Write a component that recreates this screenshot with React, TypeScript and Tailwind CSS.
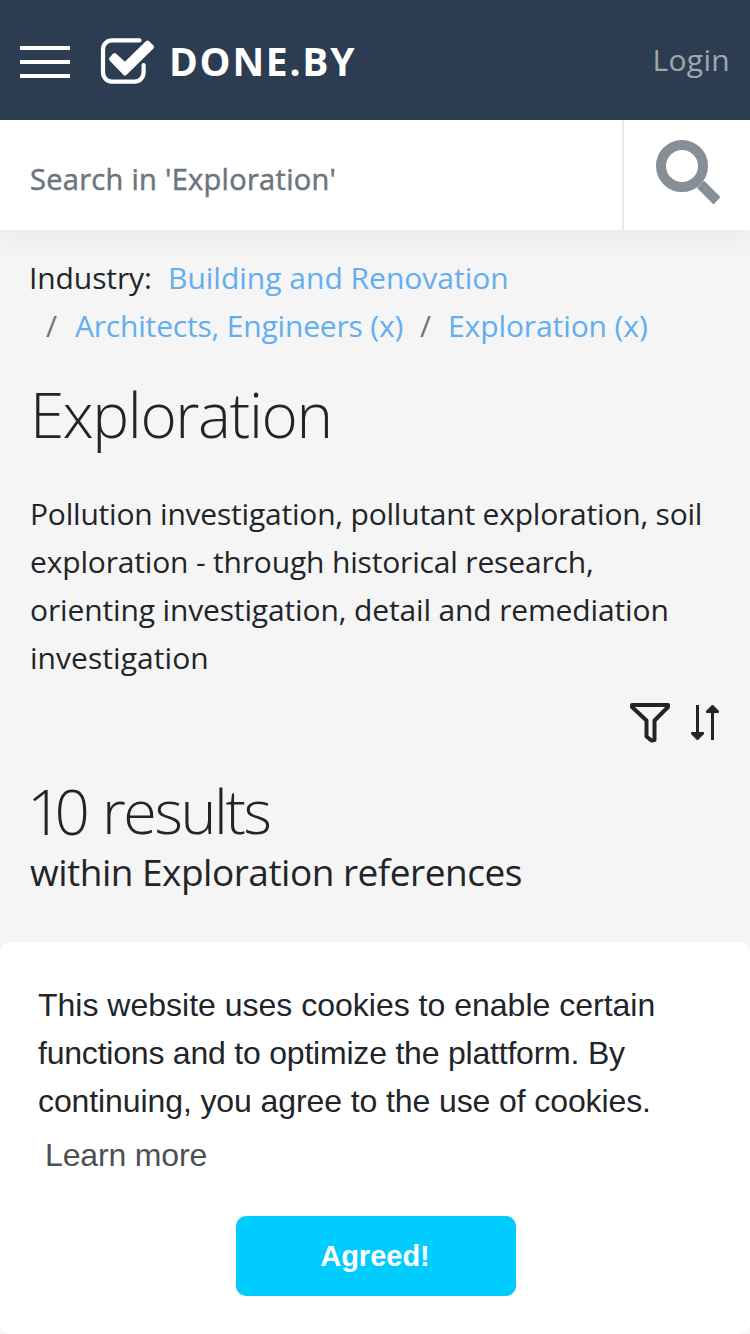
export default function App() {
  return (
    <div className="flex h-[1334px] w-[750px] flex-col overflow-hidden bg-[#f5f5f5] font-['Open_Sans','Noto_Sans',sans-serif] text-[30px] leading-[48px] whitespace-nowrap text-[#212529]">
      <header className="flex h-[120px] shrink-0 items-center bg-[#2c3d51] pr-5 pl-5">
        <button aria-label="Menu" className="flex w-[50px] flex-col gap-[10px] pt-1">
          <span className="h-1 w-full bg-white" />
          <span className="h-1 w-full bg-white" />
          <span className="h-1 w-full bg-white" />
        </button>
        <svg className="ml-[30px] h-[48px] w-[56px] shrink-0" viewBox="0 0 56 48" fill="none">
          <path d="M39.500 4.400H12a9 9 0 0 0-9 9v23.200a9 9 0 0 0 9 9h22.600a9 9 0 0 0 9-9V29" stroke="#fff" strokeWidth="4.2" strokeLinecap="round" />
          <path d="M11 23l3.500-4 10.500 9.500L47.500 6.500l4.500 4.500L25 37.500z" fill="#fff" stroke="#fff" strokeWidth="4" strokeLinejoin="round" />
        </svg>
        <span className="ml-[13px] pt-[2px] text-[39px] font-bold tracking-[1.75px] text-white">DONE.BY</span>
        <a className="ml-auto text-[30px] tracking-[0.3px] text-[#a0a7af]">Login</a>
      </header>

      <div className="relative flex h-[110px] shrink-0 bg-white shadow-[0_8px_32px_rgba(0,0,0,0.055)]">
        <div className="flex flex-1 items-center pt-[8px] pl-[30px] text-[29px] font-medium tracking-[0.3px] text-[#6c757d] [-webkit-text-stroke:0.5px_#6c757d]">Search in 'Exploration'</div>
        <button aria-label="Search" className="flex w-[128px] border-l-2 border-[#e9e9e9] pt-5 pl-8">
          <svg className="h-[66px] w-[66px]" viewBox="0 0 66 66" fill="none">
            <circle cx="26" cy="26" r="21" stroke="#868e96" strokeWidth="10" />
            <path d="M48 42L63 57L57.500 63L42.500 48Z" fill="#868e96" stroke="#868e96" strokeWidth="2" strokeLinejoin="round" />
          </svg>
        </button>
      </div>

      <main className="flex flex-col px-[30px] pt-6">
        <nav className="flex flex-col text-[#62aeef]">
          <div className="flex">
            <span className="w-[138px] -ml-[1px] mr-[1px] tracking-[-0.1px] text-[#212529]">Industry:</span>
            <a>Building and Renovation</a>
          </div>
          <div className="flex">
            <span className="w-[45px] pl-4 text-[#6c757d]">/</span>
            <a className="w-[345px] tracking-[-0.19px]">Architects, Engineers (x)</a>
            <span className="w-[28px] text-[#6c757d]">/</span>
            <a className="tracking-[-0.1px]">Exploration (x)</a>
          </div>
        </nav>
        <h1 className="mt-6 h-[80px] text-[62px] leading-[80px] font-light tracking-[-1.4px]">Exploration</h1>
        <p className="mt-9 flex flex-col">
          <span className="tracking-[-0.21px]">Pollution investigation, pollutant exploration, soil</span>
          <span className="tracking-[-0.17px]">exploration - through historical research,</span>
          <span className="tracking-[-0.14px]">orienting investigation, detail and remediation</span>
          <span className="tracking-[0.05px]">investigation</span>
        </p>
        <div className="mt-[18px] flex h-12 justify-end gap-[19px]">
          <svg className="h-[48px] w-[42px]" viewBox="0 0 42 48" fill="none" stroke="#212529" strokeWidth="4" strokeLinejoin="round">
            <path d="M3 5H39V7L25.500 20.500V40L22.500 40.500L17.500 36.500V20.500L3 7Z" />
          </svg>
          <svg className="h-[48px] w-[30px]" viewBox="0 0 30 48" fill="#212529" stroke="#212529">
            <path d="M7.500 5V35M22.500 40V10" strokeWidth="3" />
            <path d="M1.500 32.500H13.500V34L7.500 40L1.500 34Z" strokeWidth="1" />
            <path d="M16.500 12.500H28.500V11L22.500 5L16.500 11Z" strokeWidth="1" />
          </svg>
        </div>
        <h2 className="mt-[23px] flex h-[80px] text-[62px] leading-[80px] font-light">
          <span className="-ml-[3px] w-[75px] tracking-[-8px]">10</span>
          <span className="text-[61px] tracking-[-2.4px]">results</span>
        </h2>
        <p className="-mt-[3px] text-[37px] tracking-[-0.5px]">within Exploration references</p>
      </main>

      <section className="mt-auto flex h-[392px] flex-col rounded-[10px] bg-white px-[38px] pt-[39px] font-['Liberation_Sans',Arial,sans-serif] text-[32px]">
        <p className="flex flex-col">
          <span>This website uses cookies to enable certain</span>
          <span className="tracking-[-0.21px]">functions and to optimize the plattform. By</span>
          <span className="tracking-[-0.1px]">continuing, you agree to the use of cookies.</span>
        </p>
        <a className="mt-[6px] pl-[7px] tracking-[-0.15px] text-[#4d5154]">Learn more</a>
        <button className="mt-[37px] ml-[198px] h-20 w-[280px] rounded-[10px] bg-[#00ccff] pr-[2px] text-[29px] font-bold text-white">Agreed!</button>
      </section>
    </div>
  );
}
